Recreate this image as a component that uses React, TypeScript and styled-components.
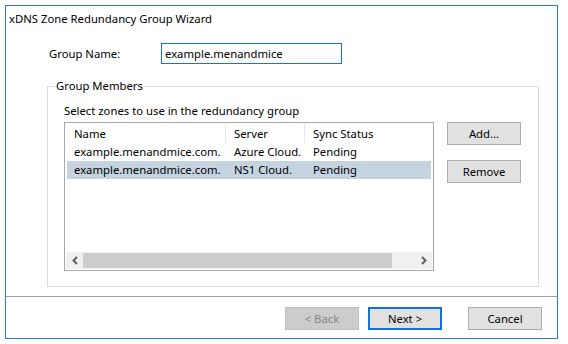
import styled, { createGlobalStyle } from 'styled-components'

const GlobalStyle = createGlobalStyle`
    html, body {
        margin: 0;
        padding: 0;
        background: #ffffff;
    }
    body {
        font-family: "Segoe UI", "Noto Sans", "Liberation Sans", sans-serif;
        font-size: 11.3px;
        color: #000000;
    }
`

const Page = styled.div`
    width: 568px;
    height: 344px;
    padding: 5px;
    box-sizing: border-box;
`

const Window = styled.div`
    width: 553px;
    height: 334px;
    box-sizing: border-box;
    border: 1px solid #2b7bcf;
    display: flex;
    flex-direction: column;
    background: #ffffff;
`

const Body = styled.div`
    height: 290px;
    border-bottom: 1px solid #a0a0a0;
    display: flex;
    flex-direction: column;
`

const Title = styled.div`
    padding: 4px 0 0 3px;
    height: 18px;
    line-height: 18px;
`

const NameRow = styled.div`
    display: flex;
    align-items: center;
    margin-top: 15px;
    padding-left: 43px;
`

const Label = styled.span`
    width: 112px;
`

const TextBox = styled.div`
    width: 181px;
    height: 21px;
    box-sizing: border-box;
    border: 1px solid #1a73c8;
    padding: 0 3px;
    line-height: 19px;
`

const Group = styled.fieldset`
    margin: 15px 0 0 41px;
    padding: 0 0 0 16px;
    width: 492px;
    height: 208px;
    box-sizing: border-box;
    border: 1px solid #dcdcdc;
    min-width: 0;
`

const Legend = styled.legend`
    padding: 0 1px;
    margin-left: -9px;
    line-height: 14px;
`

const Hint = styled.div`
    margin-top: 10px;
    line-height: 16px;
`

const GroupContent = styled.div`
    display: flex;
    margin-top: 3px;
    gap: 13px;
`

const List = styled.div`
    width: 370px;
    height: 149px;
    box-sizing: border-box;
    border: 1px solid #a8a8a8;
    display: flex;
    flex-direction: column;
    padding: 1px;
`

const Rows = styled.div`
    flex: 1;
    overflow: hidden;
`

const HeaderRow = styled.div`
    display: grid;
    grid-template-columns: 160px 79px 1fr;
    height: 19px;
    line-height: 19px;
`

const HeaderCell = styled.div<{ $last?: boolean }>`
    padding-left: 8px;
    border-right: ${(p) => (p.$last ? 'none' : '1px solid #e5e5e5')};
    white-space: nowrap;
`

const Row = styled.div<{ $selected?: boolean }>`
    display: grid;
    grid-template-columns: 160px 79px 1fr;
    height: 18px;
    line-height: 18px;
    margin-left: 1px;
    width: 364px;
    background: ${(p) => (p.$selected ? '#c4d3df' : 'transparent')};
`

const Cell = styled.div`
    padding-left: 7px;
    white-space: nowrap;
    overflow: hidden;
`

const ScrollBar = styled.div`
    height: 17px;
    display: flex;
    align-items: center;
    background: #f0f0f0;
`

const Arrow = styled.div`
    width: 17px;
    height: 17px;
    display: flex;
    align-items: center;
    justify-content: center;
`

const Track = styled.div`
    flex: 1;
    display: flex;
    height: 15px;
`

const Thumb = styled.div`
    width: 309px;
    background: #cdcdcd;
`

const SideButtons = styled.div`
    display: flex;
    flex-direction: column;
    gap: 15px;
`

const Button = styled.button<{ $default?: boolean }>`
    width: 74px;
    height: 23px;
    box-sizing: border-box;
    font: inherit;
    color: #000000;
    background: #e1e1e1;
    border: ${(p) => (p.$default ? '2px solid #0f74d6' : '1px solid #adadad')};
    padding: 0;
    &:disabled {
        background: #cccccc;
        border-color: #bfbfbf;
        color: #838383;
    }
`

const Footer = styled.div`
    flex: 1;
    display: flex;
    justify-content: flex-end;
    align-items: flex-start;
    padding: 10px 15px 0 0;
    gap: 9px;
`

const FooterGap = styled.div`
    width: 8px;
`

function Chevron({ dir }: { dir: 'left' | 'right' }) {
    return (
        <svg width="8" height="9" viewBox="0 0 8 9">
            <path
                d={dir === 'left' ? 'M6 1 L2.5 4.5 L6 8' : 'M2 1 L5.5 4.5 L2 8'}
                fill="none"
                stroke="#606060"
                strokeWidth="2"
            />
        </svg>
    )
}

const members = [
    { name: 'example.menandmice.com.', server: 'Azure Cloud.', status: 'Pending' },
    { name: 'example.menandmice.com.', server: 'NS1 Cloud.', status: 'Pending', selected: true },
]

export default function App() {
    return (
        <Page>
            <GlobalStyle />
            <Window>
                <Body>
                    <Title>xDNS Zone Redundancy Group Wizard</Title>
                    <NameRow>
                        <Label>Group Name:</Label>
                        <TextBox>example.menandmice</TextBox>
                    </NameRow>
                    <Group>
                        <Legend>Group Members</Legend>
                        <Hint>Select zones to use in the redundancy group</Hint>
                        <GroupContent>
                            <List>
                                <Rows>
                                    <HeaderRow>
                                        <HeaderCell>Name</HeaderCell>
                                        <HeaderCell>Server</HeaderCell>
                                        <HeaderCell $last>Sync Status</HeaderCell>
                                    </HeaderRow>
                                    {members.map((m, i) => (
                                        <Row key={i} $selected={m.selected}>
                                            <Cell>{m.name}</Cell>
                                            <Cell>{m.server}</Cell>
                                            <Cell>{m.status}</Cell>
                                        </Row>
                                    ))}
                                </Rows>
                                <ScrollBar>
                                    <Arrow>
                                        <Chevron dir="left" />
                                    </Arrow>
                                    <Track>
                                        <Thumb />
                                    </Track>
                                    <Arrow>
                                        <Chevron dir="right" />
                                    </Arrow>
                                </ScrollBar>
                            </List>
                            <SideButtons>
                                <Button>Add...</Button>
                                <Button>Remove</Button>
                            </SideButtons>
                        </GroupContent>
                    </Group>
                </Body>
                <Footer>
                    <Button disabled>&lt; Back</Button>
                    <Button $default>Next &gt;</Button>
                    <FooterGap />
                    <Button>Cancel</Button>
                </Footer>
            </Window>
        </Page>
    )
}
